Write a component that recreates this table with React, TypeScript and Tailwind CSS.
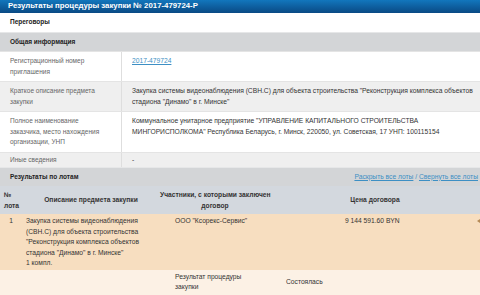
import React from 'react';

interface InfoRow {
  label: string[];
  value: React.ReactNode;
  shaded?: boolean;
  compact?: boolean;
}

const infoRows: InfoRow[] = [
  {
    label: ['Регистрационный номер', 'приглашения'],
    value: <a href="#" className="text-[#3d8fc4] underline">2017-479724</a>,
  },
  {
    label: ['Краткое описание предмета', 'закупки'],
    value: (
      <>
        <div>Закупка системы видеонаблюдения (СВН.С) для объекта строительства "Реконструкция комплекса объектов</div>
        <div>стадиона "Динамо" в г. Минске"</div>
      </>
    ),
    shaded: true,
  },
  {
    label: ['Полное наименование', 'заказчика, место нахождения', 'организации, УНП'],
    value: (
      <>
        <div>Коммунальное унитарное предприятие "УПРАВЛЕНИЕ КАПИТАЛЬНОГО СТРОИТЕЛЬСТВА</div>
        <div>МИНГОРИСПОЛКОМА" Республика Беларусь, г. Минск, 220050, ул. Советская, 17 УНП: 100115154</div>
      </>
    ),
  },
  {
    label: ['Иные сведения'],
    value: '-',
    shaded: true,
    compact: true,
  },
];

const SectionBar = ({ children }: { children: React.ReactNode }) => (
  <div className="flex h-[19px] items-center justify-between border-t border-[#e6e7e8] bg-[#d3d5d7] pl-[10px] pr-[2px]">
    {children}
  </div>
);

const App = () => {
  return (
    <div
      className="h-[295px] w-[480px] overflow-hidden bg-white text-[6.7px] leading-[10.5px] text-[#3a3a3a]"
      style={{ fontFamily: '"Liberation Sans", Arial, sans-serif' }}
    >
      <div className="flex h-[13px] items-center bg-gradient-to-b from-[#1276bd] to-[#0a4a84] pl-[8px] text-[7.8px] font-bold text-white">
        Результаты процедуры закупки № 2017-479724-Р
      </div>
      <div className="flex h-[19px] items-center pl-[10px] text-[6.5px] font-bold text-[#222]">Переговоры</div>
      <SectionBar>
        <span className="text-[6.5px] font-bold text-[#222]">Общая информация</span>
      </SectionBar>

      <div>
        {infoRows.map((row, i) => (
          <div
            key={i}
            className={`grid grid-cols-[122px_1fr] border-t border-[#e4e4e4] ${row.shaded ? 'bg-[#efefef]' : 'bg-white'}`}
          >
            <div
              className={`border-r border-[#dedede] pl-[10px] text-[6.5px] text-[#666] ${row.compact ? 'py-[2px]' : 'py-[4px]'}`}
            >
              {row.label.map((l, j) => (
                <div key={j}>{l}</div>
              ))}
            </div>
            <div className={`whitespace-nowrap pl-[10px] text-[#333] ${row.compact ? 'py-[2px]' : 'py-[4px]'}`}>
              {row.value}
            </div>
          </div>
        ))}
      </div>

      <SectionBar>
        <span className="text-[6.5px] font-bold text-[#222]">Результаты по лотам</span>
        <span className="whitespace-nowrap text-[#3d8fc4]">
          <a href="#" className="underline">Раскрыть все лоты</a> / <a href="#" className="underline">Свернуть все лоты</a>
        </span>
      </SectionBar>

      <div className="grid h-[28px] grid-cols-[22px_138px_110px_1fr] items-center bg-[#d3d8de] font-bold text-[#333]">
        <div className="pl-[4px] leading-[11px]">
          <div>№</div>
          <div>лота</div>
        </div>
        <div className="text-center">Описание предмета закупки</div>
        <div className="text-center leading-[11px]">
          <div className="whitespace-nowrap">Участники, с которыми заключен</div>
          <div>договор</div>
        </div>
        <div className="text-center">Цена договора</div>
      </div>

      <div className="relative grid h-[56px] grid-cols-[22px_138px_110px_1fr] bg-[#f7dec0] pt-[2px] text-[#333]">
        <div className="text-center">1</div>
        <div className="pl-[4px]">
          <div>Закупка системы видеонаблюдения</div>
          <div>(СВН.С) для объекта строительства</div>
          <div>"Реконструкция комплекса объектов</div>
          <div>стадиона "Динамо" в г. Минске"</div>
          <div>1 компл.</div>
        </div>
        <div className="pl-[15px]">ООО "Ксорекс-Сервис"</div>
        <div className="pl-[75px]">9 144 591.60 BYN</div>
        <span className="absolute right-0 top-[5px] h-0 w-0 border-y-[2px] border-r-[3px] border-y-transparent border-r-[#b58a55]" />
      </div>

      <div className="grid h-[26px] grid-cols-[160px_111px_1fr] bg-[#fcf1e5] pt-[2px] leading-[10px] text-[#333]">
        <div />
        <div className="pl-[15px]">
          <div>Результат процедуры</div>
          <div>закупки</div>
        </div>
        <div className="pl-[15px] pt-[5px]">Состоялась</div>
      </div>
    </div>
  );
};

export default App;
